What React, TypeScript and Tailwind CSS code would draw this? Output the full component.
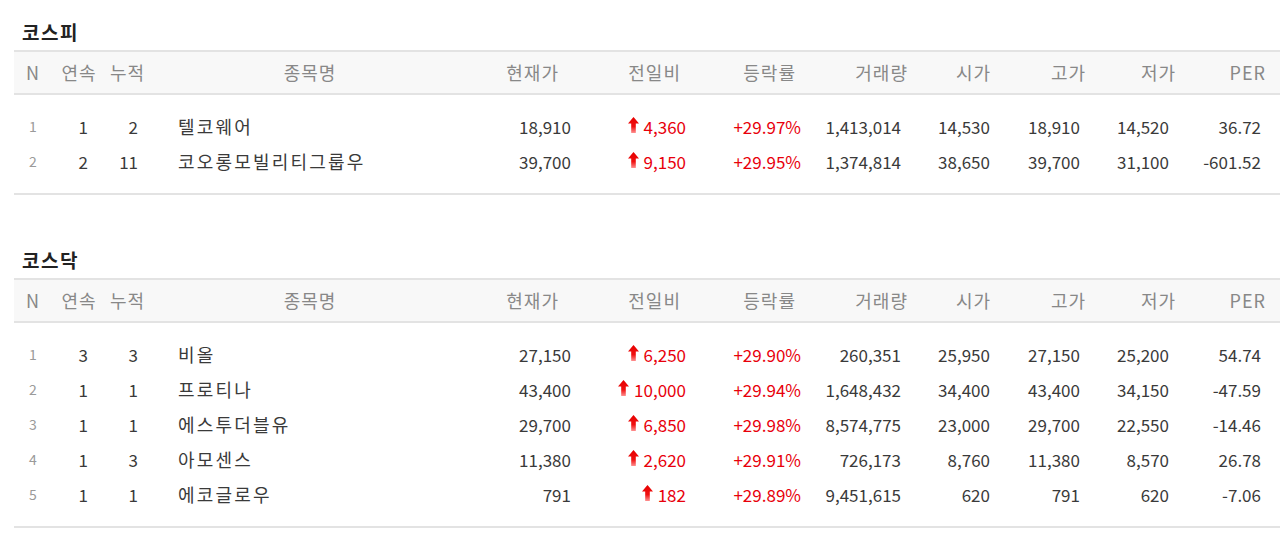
import React from "react";

type Row = {
  n: number;
  a: string;
  b: string;
  name: string;
  price: string;
  diff: string;
  rate: string;
  vol: string;
  open: string;
  high: string;
  low: string;
  per: string;
};

const kospi: Row[] = [
  { n: 1, a: "1", b: "2", name: "텔코웨어", price: "18,910", diff: "4,360", rate: "+29.97%", vol: "1,413,014", open: "14,530", high: "18,910", low: "14,520", per: "36.72" },
  { n: 2, a: "2", b: "11", name: "코오롱모빌리티그룹우", price: "39,700", diff: "9,150", rate: "+29.95%", vol: "1,374,814", open: "38,650", high: "39,700", low: "31,100", per: "-601.52" },
];

const kosdaq: Row[] = [
  { n: 1, a: "3", b: "3", name: "비올", price: "27,150", diff: "6,250", rate: "+29.90%", vol: "260,351", open: "25,950", high: "27,150", low: "25,200", per: "54.74" },
  { n: 2, a: "1", b: "1", name: "프로티나", price: "43,400", diff: "10,000", rate: "+29.94%", vol: "1,648,432", open: "34,400", high: "43,400", low: "34,150", per: "-47.59" },
  { n: 3, a: "1", b: "1", name: "에스투더블유", price: "29,700", diff: "6,850", rate: "+29.98%", vol: "8,574,775", open: "23,000", high: "29,700", low: "22,550", per: "-14.46" },
  { n: 4, a: "1", b: "3", name: "아모센스", price: "11,380", diff: "2,620", rate: "+29.91%", vol: "726,173", open: "8,760", high: "11,380", low: "8,570", per: "26.78" },
  { n: 5, a: "1", b: "1", name: "에코글로우", price: "791", diff: "182", rate: "+29.89%", vol: "9,451,615", open: "620", high: "791", low: "620", per: "-7.06" },
];

const grid =
  "grid grid-cols-[38px_48px_50px_320px_120px_115px_115px_100px_89px_90px_89px_92px]";

function UpArrow() {
  return (
    <svg width="11" height="16" viewBox="0 0 11 16" className="mr-[5px] mb-[3px] shrink-0">
      <defs>
        <linearGradient id="ua" x1="0" y1="0" x2="0" y2="1">
          <stop offset="0" stopColor="#e60000" />
          <stop offset="0.6" stopColor="#f01010" />
          <stop offset="1" stopColor="#ff9090" />
        </linearGradient>
      </defs>
      <path d="M5.5 0 L11 6.5 L7.8 6.5 L7.8 16 L3.2 16 L3.2 6.5 L0 6.5 Z" fill="url(#ua)" />
    </svg>
  );
}

function Section({ title, rows, className }: { title: string; rows: Row[]; className?: string }) {
  return (
    <section className={className}>
      <h2 className="pl-[22px] h-[24px] leading-[24px] text-[19px] tracking-[1.5px] font-bold text-[#222] mb-[6px]">
        {title}
      </h2>
      <div className="ml-[14px]">
        <div
          className={`${grid} h-[45px] items-center bg-[#f8f8f8] border-y-2 border-[#e3e3e3] text-[#888] text-[18px] tracking-[1px]`}
        >
          <div className="text-center">N</div>
          <div className="text-center pl-[6px]">연속</div>
          <div className="text-left pl-[10px] whitespace-nowrap">누적</div>
          <div className="text-center">종목명</div>
          <div className="text-right pr-[31px]">현재가</div>
          <div className="text-right pr-[24px]">전일비</div>
          <div className="text-right pr-[24px]">등락률</div>
          <div className="text-right pr-[12px]">거래량</div>
          <div className="text-right pr-[18px]">시가</div>
          <div className="text-right pr-[13px]">고가</div>
          <div className="text-right pr-[12px]">저가</div>
          <div className="text-right pr-[14px]">PER</div>
        </div>
        <div className="pt-[14px] pb-[14px] border-b-2 border-[#e3e3e3] text-[17px] text-[#3a3a3a]">
          {rows.map((r) => (
            <div key={r.n} className={`${grid} h-[35px] items-center`}>
              <div className="text-center text-[14px] text-[#9a9a9a]">{r.n}</div>
              <div className="text-right pr-[12px]">{r.a}</div>
              <div className="text-right pr-[12px]">{r.b}</div>
              <div className="text-left pl-[28px] text-[18px] tracking-[2.2px]">{r.name}</div>
              <div className="text-right pr-[19px]">{r.price}</div>
              <div className="flex items-center justify-end pr-[19px] text-[#e8000b]">
                <UpArrow />
                <span>{r.diff}</span>
              </div>
              <div className="text-right pr-[19px] text-[#e8000b]">{r.rate}</div>
              <div className="text-right pr-[19px]">{r.vol}</div>
              <div className="text-right pr-[19px]">{r.open}</div>
              <div className="text-right pr-[19px]">{r.high}</div>
              <div className="text-right pr-[19px]">{r.low}</div>
              <div className="text-right pr-[19px]">{r.per}</div>
            </div>
          ))}
        </div>
      </div>
    </section>
  );
}

export default function App() {
  return (
    <div
      className="w-[1280px] h-[534px] bg-white overflow-hidden pt-[20px]"
      style={{ fontFamily: '"Noto Sans CJK KR", "Noto Sans", sans-serif' }}
    >
      <Section title="코스피" rows={kospi} />
      <Section title="코스닥" rows={kosdaq} className="mt-[53px]" />
    </div>
  );
}
